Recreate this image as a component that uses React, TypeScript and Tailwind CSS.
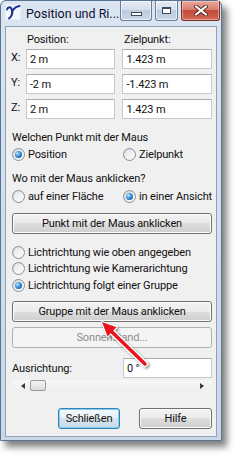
import React from "react";

const font = { fontFamily: 'Roboto, "Liberation Sans", sans-serif' };

function Radio({ checked }: { checked?: boolean }) {
  return (
    <span className="relative flex h-[13px] w-[13px] shrink-0 items-center justify-center rounded-full border border-[#8a8f94] bg-[linear-gradient(135deg,#d4d6d8,#ffffff)]">
      {checked ? (
        <span className="h-[7px] w-[7px] rounded-full bg-[radial-gradient(circle_at_35%_35%,#bfe6ff_0%,#3a8fd8_45%,#0f4b8c_100%)]" />
      ) : (
        <span className="h-[9px] w-[9px] rounded-full bg-[linear-gradient(135deg,#e4e6e8,#fbfbfb)]" />
      )}
    </span>
  );
}

function Btn({
  children,
  className = "",
  variant = "normal",
}: {
  children: React.ReactNode;
  className?: string;
  variant?: "normal" | "default" | "disabled";
}) {
  const v =
    variant === "disabled"
      ? "border-[#adb2b5] bg-[#f4f4f4] text-[#8c8c8c]"
      : variant === "default"
      ? "border-[#3c7fb1] bg-[linear-gradient(to_bottom,#f3f8fb_0%,#e8f0f5_50%,#d7e4ee_50%,#cbdbe7_100%)] shadow-[inset_0_0_0_1px_#79d2f6] text-[#111]"
      : "border-[#707070] bg-[linear-gradient(to_bottom,#f2f2f2_0%,#ebebeb_50%,#dddddd_50%,#cfcfcf_100%)] shadow-[inset_0_0_0_1px_#fbfbfb] text-[#111]";
  return (
    <div
      className={`flex h-[21px] items-center justify-center whitespace-nowrap rounded-[3px] border text-[11px] leading-none tracking-[-0.15px] ${v} ${className}`}
    >
      {children}
    </div>
  );
}

function Field({ value, className = "" }: { value: string; className?: string }) {
  return (
    <div
      className={`flex h-[20px] items-center whitespace-nowrap border border-[#c3c9d1] border-t-[#abadb3] bg-white pl-[3px] text-[11px] leading-none tracking-[-0.15px] ${className}`}
    >
      {value}
    </div>
  );
}

export default function App() {
  return (
    <div className="relative h-[457px] w-[239px] overflow-hidden bg-white text-[#111]" style={font}>
      {/* window */}
      <div className="flex h-[441px] w-[222px] flex-col rounded-t-[6px] border border-[#5a7390] bg-[linear-gradient(to_bottom,#dbe5f1,#c9d7e8)] shadow-[5px_6px_7px_rgba(0,0,0,0.5)]">
        {/* title bar */}
        <div className="relative flex h-[25px] items-start">
          <div className="ml-[4px] mt-[3px] flex h-[16px] w-[16px] shrink-0 items-center justify-center">
            <svg width="16" height="16" viewBox="0 0 16 16">
              <rect x="0.5" y="0.5" width="15" height="15" fill="#f4f7fb" />
              <path d="M2 5.5 C3 2.5 6 2.5 7 6 C7.8 9.5 6.5 12.5 4 14.5" fill="none" stroke="#1b2f98" strokeWidth="2" strokeLinecap="round" />
              <path d="M7 7.5 C8.8 4.5 11 2.5 14.5 2" fill="none" stroke="#1b2f98" strokeWidth="2" strokeLinecap="round" />
            </svg>
          </div>
          <div className="ml-[5px] mt-[5px] whitespace-nowrap text-[12.5px] leading-[16px] text-[#101030]">Position und Ri...</div>
          {/* caption buttons */}
          <div className="ml-auto mr-[1px] flex shrink-0 gap-[3px]">
            <div className="flex h-[20px] w-[32px] items-end justify-center rounded-b-[3px] border border-t-0 border-[#6a7f99] bg-[linear-gradient(to_bottom,#e4ebf4_0%,#d3deeb_50%,#bccbdd_50%,#c9d7e8_100%)] pb-[4px] shadow-[inset_0_0_0_1px_rgba(255,255,255,0.6)]">
              <span className="h-[4px] w-[11px] border border-[#3c4a5c] bg-white" />
            </div>
            <div className="flex h-[20px] w-[23px] items-center justify-center rounded-b-[3px] border border-t-0 border-[#6a7f99] bg-[linear-gradient(to_bottom,#e4ebf4_0%,#d3deeb_50%,#bccbdd_50%,#c9d7e8_100%)] shadow-[inset_0_0_0_1px_rgba(255,255,255,0.6)]">
              <span className="h-[7px] w-[9px] border border-t-2 border-[#3c4a5c] bg-white" />
            </div>
            <div className="flex h-[20px] w-[39px] items-center justify-center rounded-b-[3px] border border-t-0 border-[#7a2e26] bg-[linear-gradient(to_bottom,#e8a79b_0%,#d77a6c_50%,#c44a3a_50%,#d06a56_100%)] shadow-[inset_0_0_0_1px_rgba(255,220,210,0.5)]">
              <svg width="14" height="11" viewBox="0 0 14 11">
                <path d="M2 1.5 L12 9.5 M12 1.5 L2 9.5" stroke="#5a2a24" strokeWidth="4" strokeLinecap="round" />
                <path d="M2 1.5 L12 9.5 M12 1.5 L2 9.5" stroke="#ffffff" strokeWidth="2.2" strokeLinecap="round" />
              </svg>
            </div>
          </div>
        </div>

        {/* client area */}
        <div className="mx-[4px] flex h-[411px] flex-col whitespace-nowrap border border-[#8ea2ba] bg-[#f0f0f0] pl-[6px] pr-[4px] text-[11px] leading-[15px] tracking-[-0.15px]">
          {/* header */}
          <div className="mt-[5px] flex h-[15px]">
            <div className="ml-[15px] w-[96px]">Position:</div>
            <div className="ml-[1px]">Zielpunkt:</div>
          </div>
          {/* xyz rows */}
          <div className="mt-[2px] flex flex-col gap-[5px]">
            {[
              ["X:", "2 m", "1.423 m"],
              ["Y:", "-2 m", "-1.423 m"],
              ["Z:", "2 m", "1.423 m"],
            ].map(([l, a, b]) => (
              <div key={l} className="flex h-[20px] items-start">
                <div className="-ml-[1px] mt-[1px] w-[15px]">{l}</div>
                <Field value={a} className="w-[90px]" />
                <Field value={b} className="ml-[7px] w-[90px]" />
              </div>
            ))}
          </div>

          <div className="mt-[11px] h-[15px]">Welchen Punkt mit der Maus</div>
          <div className="mt-[2px] flex h-[15px] items-center">
            <div className="flex w-[111px] items-center gap-[3px]">
              <Radio checked />
              <span>Position</span>
            </div>
            <div className="flex items-center gap-[3px]">
              <Radio />
              <span>Zielpunkt</span>
            </div>
          </div>

          <div className="mt-[9px] h-[15px]">Wo mit der Maus anklicken?</div>
          <div className="mt-[3px] flex h-[15px] items-center">
            <div className="flex w-[115px] items-center gap-[3px]">
              <Radio />
              <span>auf einer Fläche</span>
            </div>
            <div className="flex items-center gap-[3px]">
              <Radio checked />
              <span>in einer Ansicht</span>
            </div>
          </div>

          <Btn className="mt-[9px] w-[200px]">Punkt mit der Maus anklicken</Btn>

          <div className="mt-[10px] flex flex-col">
            <div className="flex h-[16px] items-center gap-[3px]">
              <Radio />
              <span>Lichtrichtung wie oben angegeben</span>
            </div>
            <div className="flex h-[17px] items-center gap-[3px]">
              <Radio />
              <span>Lichtrichtung wie Kamerarichtung</span>
            </div>
            <div className="flex h-[17px] items-center gap-[3px]">
              <Radio checked />
              <span>Lichtrichtung folgt einer Gruppe</span>
            </div>
          </div>

          <Btn className="mt-[7px] w-[200px]">Gruppe mit der Maus anklicken</Btn>
          <Btn variant="disabled" className="mt-[5px] w-[200px]">Sonnenstand...</Btn>

          <div className="mt-[10px] flex h-[20px] items-center">
            <div className="w-[111px]">Ausrichtung:</div>
            <Field value="0 °" className="w-[89px]" />
          </div>

          {/* slider-like scrollbar */}
          <div className="mt-[2px] flex h-[11px] w-[200px] items-center bg-[linear-gradient(to_bottom,#f7f7f7,#eeeeee)]">
            <div className="flex w-[18px] justify-center pl-[3px]">
              <span className="h-0 w-0 border-y-[3px] border-r-[4px] border-y-transparent border-r-[#3a3a3a]" />
            </div>
            <div className="h-[11px] w-[16px] rounded-[2px] border border-[#9a9a9a] bg-[linear-gradient(to_bottom,#f4f4f4,#dcdcdc)]" />
            <div className="flex-1" />
            <div className="flex w-[18px] justify-center pr-[3px]">
              <span className="h-0 w-0 border-y-[3px] border-l-[4px] border-y-transparent border-l-[#3a3a3a]" />
            </div>
          </div>

          <div className="mt-[17px] flex">
            <Btn variant="default" className="ml-[46px] w-[62px]">Schließen</Btn>
            <Btn className="ml-[19px] w-[73px]">Hilfe</Btn>
          </div>
        </div>
      </div>

      {/* red arrow overlay */}
      <svg className="pointer-events-none absolute left-0 top-0" width="239" height="457" viewBox="0 0 239 457">
        <defs>
          <filter id="ds" x="-20%" y="-20%" width="140%" height="140%">
            <feDropShadow dx="1.5" dy="1.5" stdDeviation="1.2" floodColor="#000" floodOpacity="0.45" />
          </filter>
        </defs>
        <g filter="url(#ds)">
          <path d="M145 364 L112 332" stroke="#ffffff" strokeWidth="6" strokeLinecap="round" />
          <path d="M102 322 L116.5 327.3 L107.6 336.4 Z" fill="#ffffff" stroke="#ffffff" strokeWidth="2" strokeLinejoin="round" />
          <path d="M145 364 L112 332" stroke="#e8141c" strokeWidth="3.5" strokeLinecap="round" />
          <path d="M102 322 L116.5 327.3 L107.6 336.4 Z" fill="#e8141c" />
        </g>
      </svg>
    </div>
  );
}
